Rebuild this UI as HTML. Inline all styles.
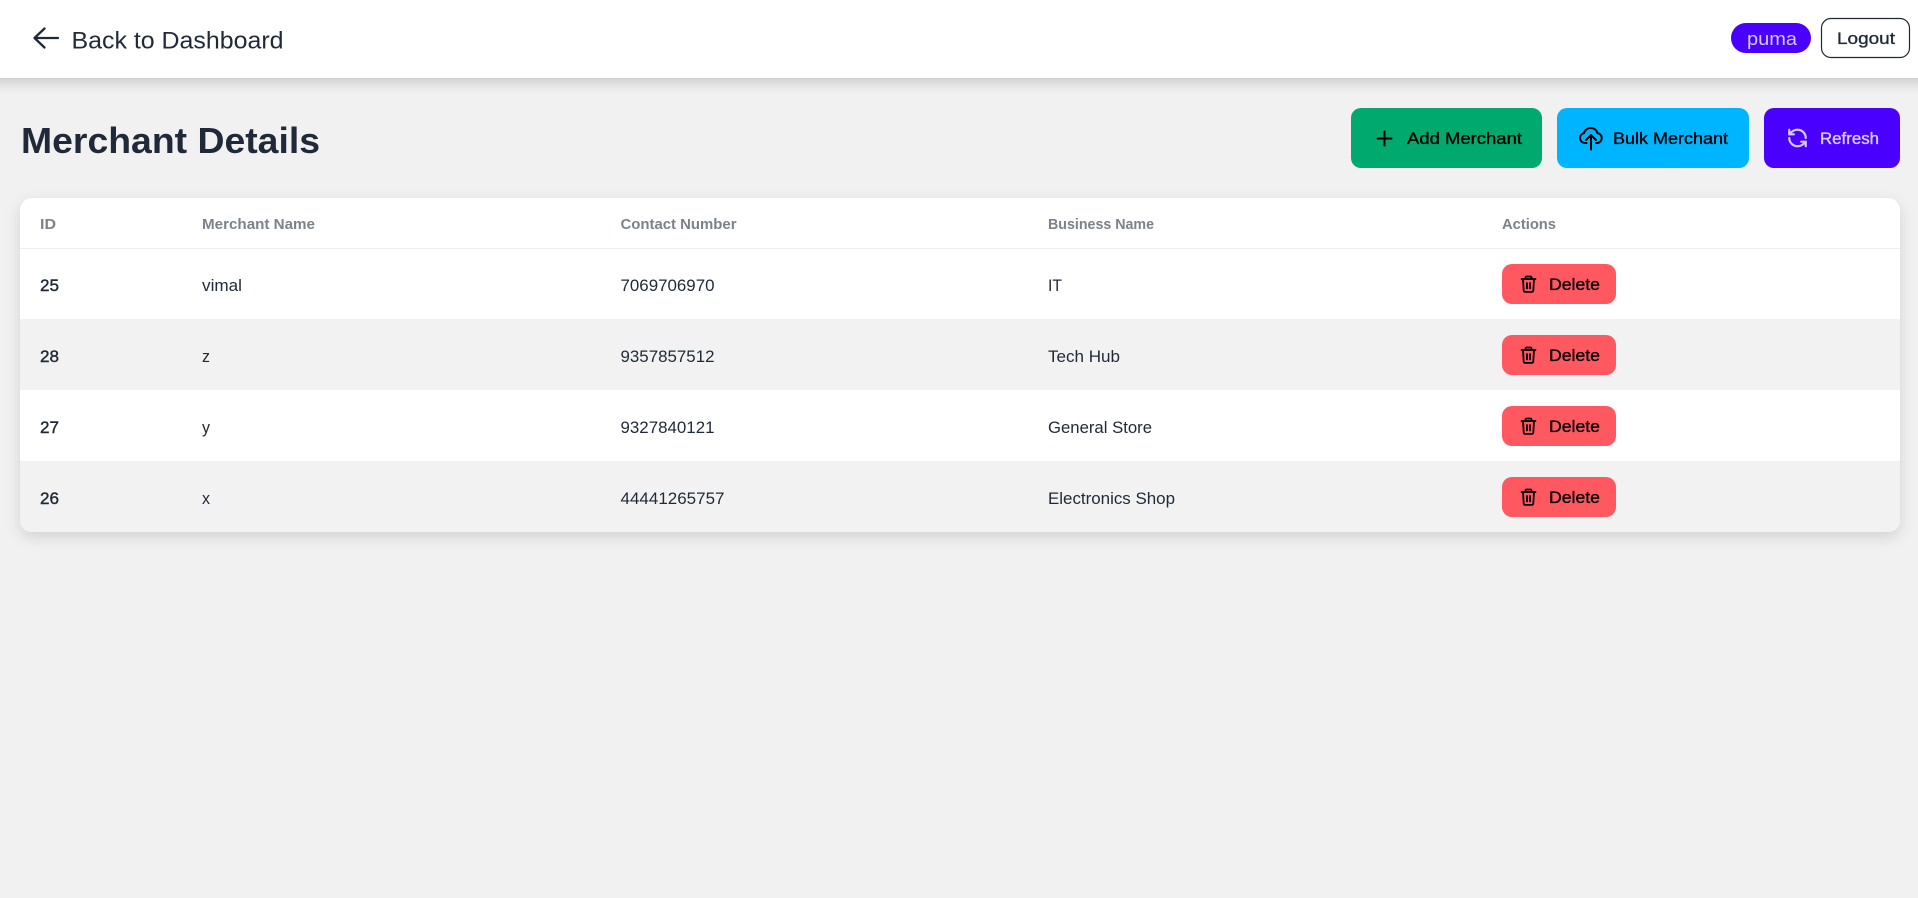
<!DOCTYPE html>
<html lang="en">
<head>
<meta charset="utf-8">
<title>Merchant Details</title>
<style>
html,body{margin:0;padding:0;width:1918px;height:898px;overflow:hidden;background:#f2f2f2}
svg{position:absolute;left:0;top:0;display:block}
text{font-family:"Liberation Sans",sans-serif}
.h{font-size:14.4px;font-weight:700;fill:#7b828c}
.b{font-size:16.8px;fill:#1f2937}
.id{font-size:16.8px;fill:#1f2937;stroke:#1f2937;stroke-width:.4px}
.btn{font-size:16.8px;stroke-width:.35px}
.k{fill:#000;stroke:#000}
.ic{fill:none;stroke-linecap:round;stroke-linejoin:round}
</style>
</head>
<body>
<svg width="1918" height="898" viewBox="0 0 1918 898" xmlns="http://www.w3.org/2000/svg">
<defs>
<filter id="s1" x="-5%" y="-50%" width="110%" height="220%"><feDropShadow dx="0" dy="5" stdDeviation="6" flood-color="#000" flood-opacity=".16"/></filter>
<filter id="s2" x="-5%" y="-20%" width="110%" height="140%"><feDropShadow dx="0" dy="5" stdDeviation="7" flood-color="#000" flood-opacity=".13"/></filter>
<clipPath id="cc"><rect x="20" y="198" width="1880" height="334" rx="12"/></clipPath>
</defs>
<rect width="1918" height="898" fill="#f1f1f1"/>

<rect x="-20" y="0" width="1958" height="78" fill="#fff" filter="url(#s1)"/>
<path class="ic" stroke="#1f2937" stroke-width="2.300" d="M58 38H34.500M44.500 28.500 34.500 38l10 9.500"/>
<text x="71.500" y="48.500" font-size="24" fill="#1f2937" textLength="212" lengthAdjust="spacingAndGlyphs">Back to Dashboard</text>

<rect x="1731" y="23" width="80" height="30" rx="15" fill="#4a00ff"/>
<text x="1747" y="45" font-size="18" fill="#d0ccff" textLength="50" lengthAdjust="spacingAndGlyphs">puma</text>
<rect x="1821.500" y="18.500" width="88" height="39" rx="9.500" fill="#fff" stroke="#1f2937" stroke-width="1.200"/>
<text class="btn" x="1837" y="44" fill="#1f2937" stroke="#1f2937" textLength="58" lengthAdjust="spacingAndGlyphs">Logout</text>

<text x="21" y="153" font-size="36" font-weight="700" fill="#1f2937" textLength="299" lengthAdjust="spacingAndGlyphs">Merchant Details</text>

<rect x="1351" y="108" width="191" height="60" rx="10" fill="#00a96e"/>
<path class="ic" stroke="#000" stroke-width="2" d="M1384.500 131.500v14M1377.500 138.500h14"/>
<text class="btn k" x="1407" y="144" textLength="115" lengthAdjust="spacingAndGlyphs">Add Merchant</text>

<rect x="1557" y="108" width="192" height="60" rx="10" fill="#00b5ff"/>
<path class="ic" stroke="#000" stroke-width="2" d="M1586.500 143h-1.500a5 5 0 0 1-1-9.900a7 7 0 0 1 13.500 0a5 5 0 0 1 0 9.900h-1.500M1591 149.500v-14M1586 140l5-5 5 5"/>
<text class="btn k" x="1613" y="144" textLength="115" lengthAdjust="spacingAndGlyphs">Bulk Merchant</text>

<rect x="1764" y="108" width="136" height="60" rx="10" fill="#4a00ff"/>
<svg x="1786.500" y="127" width="22" height="22" viewBox="0 0 24 24"><g class="ic" stroke="#d0ccff" stroke-width="2.400"><path d="M21 12a9 9 0 0 0-9-9 9.750 9.750 0 0 0-6.740 2.740L3 8"/><path d="M3 3v5h5"/><path d="M3 12a9 9 0 0 0 9 9 9.750 9.750 0 0 0 6.740-2.740L21 16"/><path d="M16 16h5v5"/></g></svg>
<text class="btn" x="1820" y="144" fill="#d8d4ff" stroke="#d8d4ff" textLength="59" lengthAdjust="spacingAndGlyphs">Refresh</text>

<rect x="20" y="198" width="1880" height="334" rx="12" fill="#fff" filter="url(#s2)"/>
<g clip-path="url(#cc)">
<rect x="20" y="248" width="1880" height="1" fill="#efefef"/>
<rect x="20" y="319" width="1880" height="71" fill="#f2f2f2"/>
<rect x="20" y="461" width="1880" height="71" fill="#f2f2f2"/>
</g>

<text class="h" x="40" y="229" textLength="16" lengthAdjust="spacingAndGlyphs">ID</text>
<text class="h" x="202" y="229" textLength="113" lengthAdjust="spacingAndGlyphs">Merchant Name</text>
<text class="h" x="620.500" y="229" textLength="116" lengthAdjust="spacingAndGlyphs">Contact Number</text>
<text class="h" x="1048" y="229" textLength="106" lengthAdjust="spacingAndGlyphs">Business Name</text>
<text class="h" x="1502" y="229" textLength="54" lengthAdjust="spacingAndGlyphs">Actions</text>

<text class="id" x="40" y="291" textLength="19" lengthAdjust="spacingAndGlyphs">25</text>
<text class="b" x="202" y="291" textLength="40" lengthAdjust="spacingAndGlyphs">vimal</text>
<text class="b" x="620.500" y="291" textLength="94" lengthAdjust="spacingAndGlyphs">7069706970</text>
<text class="b" x="1048" y="291" textLength="14" lengthAdjust="spacingAndGlyphs">IT</text>

<text class="id" x="40" y="362" textLength="19" lengthAdjust="spacingAndGlyphs">28</text>
<text class="b" x="202" y="362" textLength="8" lengthAdjust="spacingAndGlyphs">z</text>
<text class="b" x="620.500" y="362" textLength="94" lengthAdjust="spacingAndGlyphs">9357857512</text>
<text class="b" x="1048" y="362" textLength="72" lengthAdjust="spacingAndGlyphs">Tech Hub</text>

<text class="id" x="40" y="433" textLength="19" lengthAdjust="spacingAndGlyphs">27</text>
<text class="b" x="202" y="433" textLength="8" lengthAdjust="spacingAndGlyphs">y</text>
<text class="b" x="620.500" y="433" textLength="94" lengthAdjust="spacingAndGlyphs">9327840121</text>
<text class="b" x="1048" y="433" textLength="104" lengthAdjust="spacingAndGlyphs">General Store</text>

<text class="id" x="40" y="504" textLength="19" lengthAdjust="spacingAndGlyphs">26</text>
<text class="b" x="202" y="504" textLength="8" lengthAdjust="spacingAndGlyphs">x</text>
<text class="b" x="620.500" y="504" textLength="104" lengthAdjust="spacingAndGlyphs">44441265757</text>
<text class="b" x="1048" y="504" textLength="127" lengthAdjust="spacingAndGlyphs">Electronics Shop</text>

<g>
<rect x="1502" y="264" width="114" height="40" rx="10" fill="#ff5861"/>
<path class="ic" stroke="#000" stroke-width="1.800" d="M1521.500 279h14M1523 279l.7 11.500a1.500 1.500 0 0 0 1.500 1.400h6.600a1.500 1.500 0 0 0 1.500-1.400l.7-11.500M1525.500 279v-1.500a1 1 0 0 1 1-1h4a1 1 0 0 1 1 1v1.500M1527 283v5.500M1530 283v5.500"/>
<text class="btn k" x="1549" y="290" textLength="51" lengthAdjust="spacingAndGlyphs">Delete</text>
</g>
<g transform="translate(0 71)">
<rect x="1502" y="264" width="114" height="40" rx="10" fill="#ff5861"/>
<path class="ic" stroke="#000" stroke-width="1.800" d="M1521.500 279h14M1523 279l.7 11.500a1.500 1.500 0 0 0 1.500 1.400h6.600a1.500 1.500 0 0 0 1.500-1.400l.7-11.500M1525.500 279v-1.500a1 1 0 0 1 1-1h4a1 1 0 0 1 1 1v1.500M1527 283v5.500M1530 283v5.500"/>
<text class="btn k" x="1549" y="290" textLength="51" lengthAdjust="spacingAndGlyphs">Delete</text>
</g>
<g transform="translate(0 142)">
<rect x="1502" y="264" width="114" height="40" rx="10" fill="#ff5861"/>
<path class="ic" stroke="#000" stroke-width="1.800" d="M1521.500 279h14M1523 279l.7 11.500a1.500 1.500 0 0 0 1.500 1.400h6.600a1.500 1.500 0 0 0 1.500-1.400l.7-11.500M1525.500 279v-1.500a1 1 0 0 1 1-1h4a1 1 0 0 1 1 1v1.500M1527 283v5.500M1530 283v5.500"/>
<text class="btn k" x="1549" y="290" textLength="51" lengthAdjust="spacingAndGlyphs">Delete</text>
</g>
<g transform="translate(0 213)">
<rect x="1502" y="264" width="114" height="40" rx="10" fill="#ff5861"/>
<path class="ic" stroke="#000" stroke-width="1.800" d="M1521.500 279h14M1523 279l.7 11.500a1.500 1.500 0 0 0 1.500 1.400h6.600a1.500 1.500 0 0 0 1.500-1.400l.7-11.500M1525.500 279v-1.500a1 1 0 0 1 1-1h4a1 1 0 0 1 1 1v1.500M1527 283v5.500M1530 283v5.500"/>
<text class="btn k" x="1549" y="290" textLength="51" lengthAdjust="spacingAndGlyphs">Delete</text>
</g>
</svg>
</body>
</html>
